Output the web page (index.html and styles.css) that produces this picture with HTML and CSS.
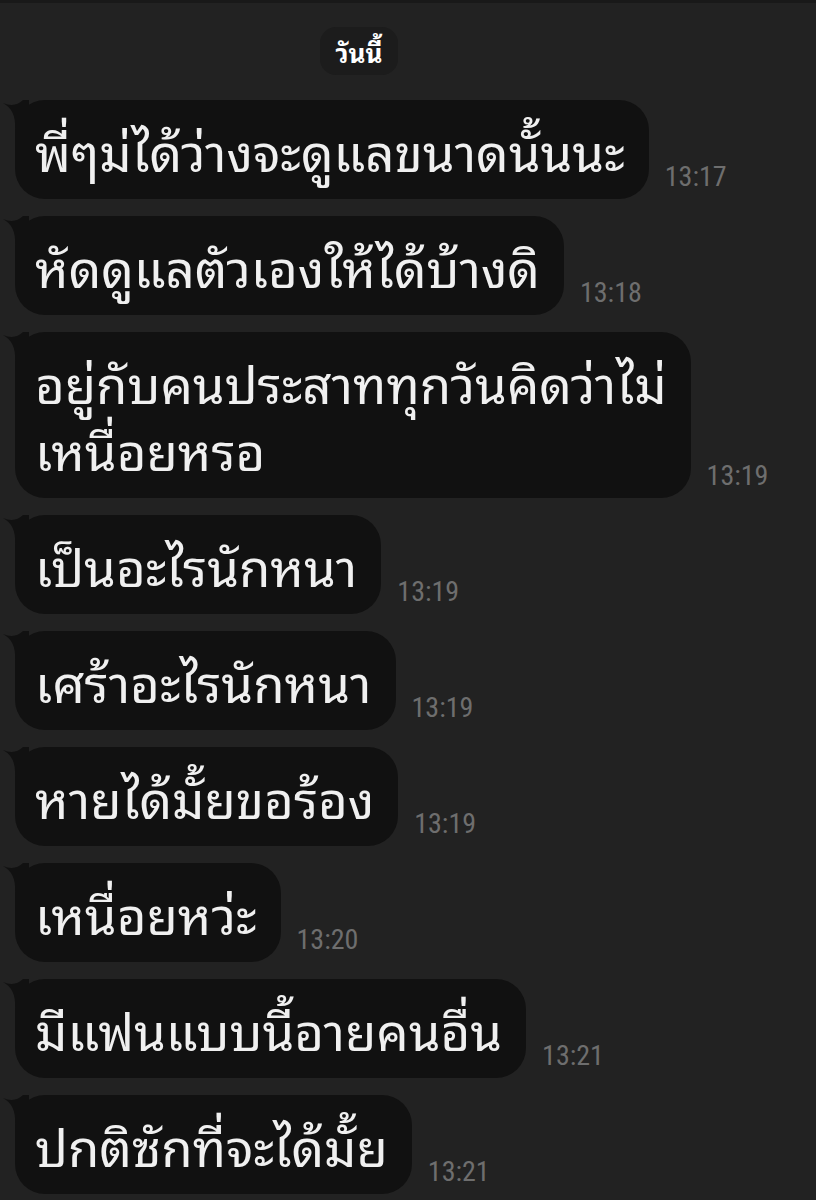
FILE: index.html
```html
<!DOCTYPE html>
<html lang="th">
<head>
  <meta charset="UTF-8">
  <meta name="viewport" content="width=device-width, initial-scale=1">
  <title>แชท</title>
  <link rel="stylesheet" href="styles.css">
</head>
<body>
  <div class="chat">
    <div class="day"><span>วันนี้</span></div>

    <div class="row">
      <div class="bubble">พี่ๆม่ได้ว่างจะดูแลขนาดนั้นนะ</div>
      <span class="time">13:17</span>
    </div>
    <div class="row">
      <div class="bubble">หัดดูแลตัวเองให้ได้บ้างดิ</div>
      <span class="time">13:18</span>
    </div>
    <div class="row">
      <div class="bubble">อยู่กับคนประสาททุกวันคิดว่าไม่<br>เหนื่อยหรอ</div>
      <span class="time">13:19</span>
    </div>
    <div class="row">
      <div class="bubble">เป็นอะไรนักหนา</div>
      <span class="time">13:19</span>
    </div>
    <div class="row">
      <div class="bubble">เศร้าอะไรนักหนา</div>
      <span class="time">13:19</span>
    </div>
    <div class="row">
      <div class="bubble">หายได้มั้ยขอร้อง</div>
      <span class="time">13:19</span>
    </div>
    <div class="row">
      <div class="bubble">เหนื่อยหว่ะ</div>
      <span class="time">13:20</span>
    </div>
    <div class="row">
      <div class="bubble">มีแฟนแบบนี้อายคนอื่น</div>
      <span class="time">13:21</span>
    </div>
    <div class="row">
      <div class="bubble">ปกติซักที่จะได้มั้ย</div>
      <span class="time">13:21</span>
    </div>
  </div>
</body>
</html>
```

FILE: styles.css
```css
body {
  margin: 0;
  background-color: #222;
  color: #f0f0f0;
  font-family: 'Noto Sans Thai Looped', 'Noto Sans', sans-serif;
  border-top: 3px solid #191919;
}
.chat {
  display: flex;
  flex-direction: column;
  gap: 17px;
  padding: 24px 15px 0 15px;
}
.day {
  text-align: center;
  padding-right: 98px;
  margin-bottom: 8px;
}
.day span {
  display: inline-block;
  background-color: #1c1c1c;
  color: #fff;
  font-weight: 700;
  font-size: 26px;
  line-height: 48px;
  padding: 0 15px;
  border-radius: 16px;
}
.row {
  display: flex;
  align-items: flex-end;
  gap: 16px;
}
.bubble {
  position: relative;
  background-color: #111;
  font-size: 51px;
  line-height: 67px;
  padding: 16px 24px 16px 20px;
  border-radius: 30px;
}
.bubble::before {
  content: '';
  position: absolute;
  left: -12px;
  top: 0;
  width: 26px;
  height: 28px;
  background-color: #111;
  clip-path: path('M0 3 Q 12 8 20 0 L26 0 L26 28 L12 28 Q 13 10 0 3 Z');
}
.time {
  color: #6e6e6e;
  font-family: 'Roboto Condensed', Roboto, sans-serif;
  font-size: 28px;
  line-height: 28px;
  margin-bottom: 8px;
}
```
